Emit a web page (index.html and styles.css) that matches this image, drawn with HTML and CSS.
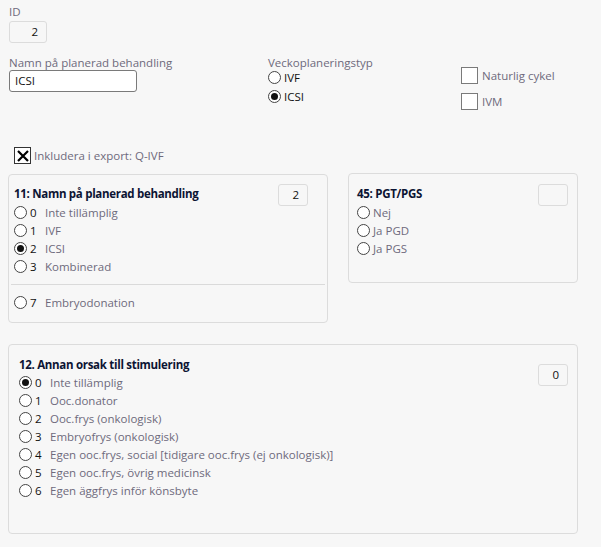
FILE: index.html
```html
<!DOCTYPE html>
<html>
<head>
<meta charset="utf-8">
<link rel="stylesheet" href="styles.css">
</head>
<body>
<div class="page">
  <div class="top">
    <div class="col-left">
      <div class="label">ID</div>
      <div class="numbox id-box">2</div>
      <div class="label name-label">Namn på planerad behandling</div>
      <div class="textinput">ICSI</div>
    </div>
    <div class="col-mid">
      <div class="label">Veckoplaneringstyp</div>
      <div class="radio-row"><span class="radio"></span><span class="dark">IVF</span></div>
      <div class="radio-row"><span class="radio checked"></span><span class="dark">ICSI</span></div>
    </div>
    <div class="col-right">
      <div class="check-row"><span class="checkbox"></span><span class="label">Naturlig cykel</span></div>
      <div class="check-row"><span class="checkbox"></span><span class="label">IVM</span></div>
    </div>
  </div>

  <div class="export-row">
    <span class="xbox"><svg width="12" height="12" viewBox="0 0 12 12"><path d="M1 1 L11 11 M11 1 L1 11" stroke="#000" stroke-width="2.2"/></svg></span>
    <span class="label">Inkludera i export: Q-IVF</span>
  </div>

  <div class="cards">
    <div class="card card-11">
      <div class="card-head">
        <div class="title">11: Namn på planerad behandling</div>
        <div class="numbox">2</div>
      </div>
      <div class="opt"><span class="radio"></span><span class="num">0</span><span class="txt">Inte tillämplig</span></div>
      <div class="opt"><span class="radio"></span><span class="num">1</span><span class="txt">IVF</span></div>
      <div class="opt"><span class="radio checked"></span><span class="num">2</span><span class="txt">ICSI</span></div>
      <div class="opt"><span class="radio"></span><span class="num">3</span><span class="txt">Kombinerad</span></div>
      <div class="sep"></div>
      <div class="opt"><span class="radio"></span><span class="num">7</span><span class="txt">Embryodonation</span></div>
    </div>
    <div class="card card-45">
      <div class="card-head">
        <div class="title">45: PGT/PGS</div>
        <div class="numbox"></div>
      </div>
      <div class="opt"><span class="radio"></span><span class="txt">Nej</span></div>
      <div class="opt"><span class="radio"></span><span class="txt">Ja PGD</span></div>
      <div class="opt"><span class="radio"></span><span class="txt">Ja PGS</span></div>
    </div>
  </div>

  <div class="card card-12">
    <div class="card-head head-12">
      <div class="title">12. Annan orsak till stimulering</div>
      <div class="numbox">0</div>
    </div>
    <div class="opts-12">
      <div class="opt"><span class="radio checked"></span><span class="num">0</span><span class="txt">Inte tillämplig</span></div>
      <div class="opt"><span class="radio"></span><span class="num">1</span><span class="txt">Ooc.donator</span></div>
      <div class="opt"><span class="radio"></span><span class="num">2</span><span class="txt">Ooc.frys (onkologisk)</span></div>
      <div class="opt"><span class="radio"></span><span class="num">3</span><span class="txt">Embryofrys (onkologisk)</span></div>
      <div class="opt"><span class="radio"></span><span class="num">4</span><span class="txt">Egen ooc.frys, social [tidigare ooc.frys (ej onkologisk)]</span></div>
      <div class="opt"><span class="radio"></span><span class="num">5</span><span class="txt">Egen ooc.frys, övrig medicinsk</span></div>
      <div class="opt"><span class="radio"></span><span class="num">6</span><span class="txt">Egen äggfrys inför könsbyte</span></div>
    </div>
  </div>
</div>
</body>
</html>
```

FILE: styles.css
```css
html, body {
  margin: 0;
  padding: 0;
  background: #f7f7f7;
}
body {
  font-family: "Open Sans", "Noto Sans", sans-serif;
  font-size: 11.5px;
  color: #1a1a2a;
}
.page {
  padding: 4px 0 0 8px;
  width: 570px;
}
.label {
  color: #6e6a7c;
  line-height: 15px;
}
.dark { color: #111; }
.top {
  display: flex;
  height: 140px;
}
.col-left {
  width: 259px;
  padding-left: 1px;
}
.numbox {
  border: 1px solid #dcdcdc;
  border-radius: 3px;
  background: #f7f7f7;
  box-sizing: border-box;
  width: 38px;
  height: 22px;
  text-align: right;
  padding-right: 8px;
  line-height: 20px;
  color: #111;
  flex: none;
}
.id-box {
  margin-top: 2px;
}
.name-label {
  margin-top: 12px;
}
.textinput {
  width: 128px;
  height: 22px;
  box-sizing: border-box;
  border: 1px solid #7a7a7a;
  border-radius: 3px;
  background: #fff;
  padding-left: 5px;
  line-height: 20px;
  color: #111;
}
.col-mid {
  width: 193px;
  padding-top: 51px;
}
.radio-row {
  display: flex;
  align-items: center;
  height: 19px;
}
.col-mid .label { margin-bottom: -2px; }
.radio {
  width: 13px;
  height: 13px;
  border: 1px solid #444;
  border-radius: 50%;
  box-sizing: border-box;
  background: #fff;
  display: inline-flex;
  align-items: center;
  justify-content: center;
  margin-right: 3px;
  flex: none;
}
.radio.checked::after {
  content: "";
  width: 7px;
  height: 7px;
  border-radius: 50%;
  background: #111;
}
.col-right {
  padding-top: 63px;
}
.check-row {
  display: flex;
  align-items: center;
  height: 17px;
  margin-bottom: 9px;
}
.checkbox {
  width: 17px;
  height: 17px;
  box-sizing: border-box;
  border: 1px solid #7a7a7a;
  background: #fff;
  margin-right: 4px;
}
.export-row {
  display: flex;
  align-items: center;
  height: 17px;
  padding-left: 6px;
  margin-top: 3px;
}
.xbox {
  width: 17px;
  height: 17px;
  box-sizing: border-box;
  border: 1px solid #333;
  background: #fff;
  display: inline-flex;
  align-items: center;
  justify-content: center;
  margin-right: 3px;
}
.cards {
  display: flex;
  align-items: flex-start;
  gap: 20px;
  margin-top: 10px;
}
.card {
  border: 1px solid #dcdcdc;
  border-radius: 4px;
  background: #f7f7f7;
  box-sizing: border-box;
}
.card-11 {
  width: 320px;
  height: 149px;
  padding: 9px 19px 0 5px;
}
.card-45 {
  width: 230px;
  height: 110px;
  margin-top: -1px;
  padding: 10px 9px 0 8px;
}
.card-head {
  display: flex;
  justify-content: space-between;
  align-items: flex-start;
  height: 19px;
  margin-bottom: 0;
}
.card-head .numbox {
  width: 30px;
  padding-right: 8px;
}
.title {
  font-weight: 700;
  letter-spacing: -0.3px;
  color: #0c1433;
  padding-top: 2px;
  line-height: 16px;
}
.opt {
  display: flex;
  align-items: center;
  height: 18px;
}
.num {
  width: 15px;
  color: #111;
}
.txt { color: #6e6a7c; }
.sep {
  height: 1px;
  background: #dadada;
  margin: 9px -17px 8px -3px;
}
.card-12 {
  width: 570px;
  height: 190px;
  margin-top: 21px;
  padding: 10px 9px 0 10px;
}
.head-12 {
  height: 18px;
}
.head-12 .numbox { margin-top: 9px; }
```
